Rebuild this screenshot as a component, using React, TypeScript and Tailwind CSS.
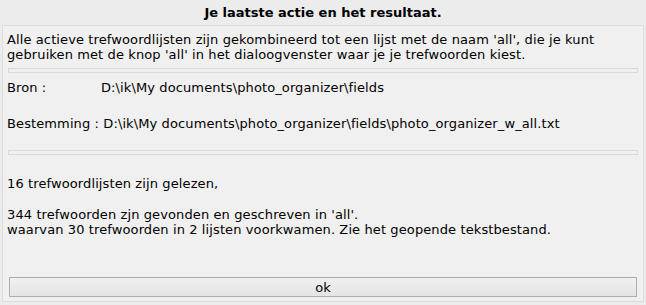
import React from "react";

export default function App() {
  return (
    <div
      className="w-[646px] h-[305px] bg-[#ececec] flex flex-col text-[13px] text-black overflow-hidden"
      style={{ fontFamily: '"DejaVu Sans", Verdana, sans-serif' }}
    >
      <div className="h-[25px] flex items-center justify-center font-bold">
        Je laatste actie en het resultaat.
      </div>
      <div className="mx-[2px] mb-[3px] flex-1 border border-[#dcdcdc] bg-[#f0f0f0] px-[4px] flex flex-col leading-[15px] tracking-[0.11px]">
        <div className="mt-[6px]">
          <div>Alle actieve trefwoordlijsten zijn gekombineerd tot een lijst met de naam 'all', die je kunt</div>
          <div>gebruiken met de knop 'all' in het dialoogvenster waar je je trefwoorden kiest.</div>
        </div>
        <div className="mt-[6px] mx-[1px] h-[5px] border border-[#dadada] bg-[#f0f0f0]" />
        <div className="mt-[7px] flex">
          <span className="w-[94px]">Bron :</span>
          <span>D:\ik\My documents\photo_organizer\fields</span>
        </div>
        <div className="mt-[21px] flex">
          <span>Bestemming :&nbsp;</span>
          <span>D:\ik\My documents\photo_organizer\fields\photo_organizer_w_all.txt</span>
        </div>
        <div className="mt-[19px] mx-[1px] h-[5px] border border-[#dadada] bg-[#f0f0f0]" />
        <div className="mt-[21px]">16 trefwoordlijsten zijn gelezen,</div>
        <div className="mt-[16px]">344 trefwoorden zjn gevonden en geschreven in 'all'.</div>
        <div>waarvan 30 trefwoorden in 2 lijsten voorkwamen. Zie het geopende tekstbestand.</div>
        <div className="flex-1" />
        <button className="mb-[4px] mx-[2px] h-[20px] border border-[#adadad] bg-gradient-to-b from-[#f0f0f0] to-[#e5e5e5] flex items-center justify-center leading-none">
          ok
        </button>
      </div>
    </div>
  );
}
